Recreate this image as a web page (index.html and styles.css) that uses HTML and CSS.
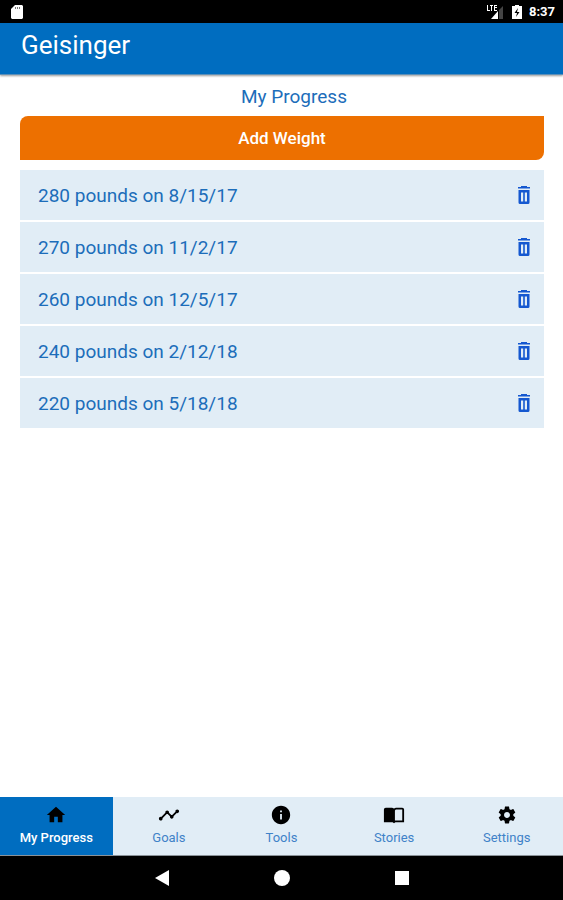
FILE: index.html
```html
<!DOCTYPE html>
<html lang="en">
<head>
  <meta charset="UTF-8">
  <meta name="viewport" content="width=device-width, initial-scale=1.0">
  <title>My Progress</title>
  <link rel="stylesheet" href="styles.css">
</head>
<body>
  <!-- shared icons -->
  <svg class="sprite" aria-hidden="true">
    <symbol id="trash" viewBox="0 0 14 18">
      <path fill-rule="evenodd" d="M4 0h6v1h3v1.500H1V1h3zM1.500 4h11v12.500q0 1.500-1.500 1.500H3q-1.500 0-1.500-1.500zM4 6.500v9h2.200v-9zM7.800 6.500v9H10v-9z"/>
    </symbol>
  </svg>

  <div class="status-bar">
    <svg class="sd-card" viewBox="0 0 12 14" width="12" height="14"><path fill="#fff" d="M4 0h7l1 1v12l-1 1H1l-1-1V4z"/><path fill="#777" d="M4 2h1v2H4zM6 2h1v2H6zM8 2h1v2H8z"/></svg>
    <div class="status-right">
      <svg viewBox="0 0 18 16" width="18" height="16"><path fill="#fff" d="M0 1h1v5h2v1H0zM3 1h3v1H5v5H4V2H3zM7 1h3v1H8v1h2v1H8v2h2v1H7zM11 7v8H4z"/><path fill="#444" d="M12 6l4-4v13h-4z"/></svg>
      <svg viewBox="0 0 10 14" width="10" height="14"><path fill="#fff" d="M3 0h4v1h3v13H0V1h3z"/><path d="M6 3L2.500 8H5l-1 4 3.500-5H5z"/></svg>
      <span>8:37</span>
    </div>
  </div>

  <header class="header">
    <div class="logo">Geisinger</div>
  </header>

  <main class="content">
    <h1>My Progress</h1>
    <button class="add-button" type="button">Add Weight</button>
    <ul class="weights">
      <li>280 pounds on 8/15/17 <button type="button" aria-label="Delete"><svg width="14" height="18"><use href="#trash"/></svg></button></li>
      <li>270 pounds on 11/2/17 <button type="button" aria-label="Delete"><svg width="14" height="18"><use href="#trash"/></svg></button></li>
      <li>260 pounds on 12/5/17 <button type="button" aria-label="Delete"><svg width="14" height="18"><use href="#trash"/></svg></button></li>
      <li>240 pounds on 2/12/18 <button type="button" aria-label="Delete"><svg width="14" height="18"><use href="#trash"/></svg></button></li>
      <li>220 pounds on 5/18/18 <button type="button" aria-label="Delete"><svg width="14" height="18"><use href="#trash"/></svg></button></li>
    </ul>
  </main>

  <nav class="tabs">
    <a href="#progress" class="active">
      <svg viewBox="0 0 24 24"><path d="M10 20v-6h4v6h5v-8h3L12 3 2 12h3v8z"/></svg>
      My Progress
    </a>
    <a href="#goals">
      <svg viewBox="0 0 24 24"><path d="M23 8c0 1.100-.9 2-2 2-.18 0-.35-.02-.51-.07l-3.560 3.550c.05.16.07.34.07.52 0 1.100-.9 2-2 2s-2-.9-2-2c0-.18.02-.36.07-.52l-2.550-2.550c-.16.05-.34.07-.52.07s-.36-.02-.52-.07l-4.550 4.560c.05.16.07.33.07.51 0 1.100-.9 2-2 2s-2-.9-2-2 .9-2 2-2c.18 0 .35.02.51.07l4.560-4.550C8.020 9.360 8 9.180 8 9c0-1.100.9-2 2-2s2 .9 2 2c0 .18-.02.36-.07.52l2.550 2.550c.16-.05.34-.07.52-.07s.36.02.52.07l3.550-3.560C19.020 8.350 19 8.180 19 8c0-1.100.9-2 2-2s2 .9 2 2z"/></svg>
      Goals
    </a>
    <a href="#tools">
      <svg viewBox="0 0 24 24"><path d="M12 2C6.480 2 2 6.480 2 12s4.480 10 10 10 10-4.480 10-10S17.520 2 12 2zm1 15h-2v-6h2v6zm0-8h-2V7h2v2z"/></svg>
      Tools
    </a>
    <a href="#stories">
      <svg viewBox="0 0 24 24"><path fill-rule="evenodd" d="M3 4h7l2 1 2-1h7q2 0 2 2v14h-9.500l-1.500 1-1.500-1H1V6q0-2 2-2zM13 7v11h8V6h-7z"/></svg>
      Stories
    </a>
    <a href="#settings">
      <svg viewBox="-1 -1 26 26"><path d="M19.430 12.980c.04-.32.07-.64.07-.98s-.03-.66-.07-.98l2.110-1.650c.19-.15.24-.42.12-.64l-2-3.460c-.12-.22-.39-.3-.61-.22l-2.490 1c-.52-.4-1.080-.73-1.690-.98l-.38-2.650C14.460 2.180 14.250 2 14 2h-4c-.25 0-.46.18-.49.42l-.38 2.650c-.61.25-1.170.59-1.690.98l-2.490-1c-.23-.09-.49 0-.61.22l-2 3.460c-.13.22-.07.49.12.64l2.110 1.650c-.04.32-.07.65-.07.98s.03.66.07.98l-2.110 1.650c-.19.15-.24.42-.12.64l2 3.460c.12.22.39.3.61.22l2.490-1c.52.4 1.080.73 1.690.98l.38 2.650c.03.24.24.42.49.42h4c.25 0 .46-.18.49-.42l.38-2.650c.61-.25 1.170-.59 1.690-.98l2.490 1c.23.09.49 0 .61-.22l2-3.460c.12-.22.07-.49-.12-.64zM12 15.500c-1.930 0-3.500-1.570-3.500-3.500s1.570-3.500 3.500-3.500 3.500 1.570 3.500 3.500-1.570 3.500-3.500 3.500z"/></svg>
      Settings
    </a>
  </nav>

  <div class="system-bar">
    <button type="button" aria-label="Back"><svg viewBox="0 0 16 16"><path d="M15 0v16L1 8z"/></svg></button>
    <button type="button" aria-label="Home"><svg viewBox="0 0 16 16"><circle cx="8" cy="8" r="8"/></svg></button>
    <button type="button" aria-label="Recent apps"><svg viewBox="0 0 16 16"><path d="M1 1h14v14H1z"/></svg></button>
  </div>
</body>
</html>
```
FILE: styles.css
```css
* {
  box-sizing: border-box;
}

body {
  margin: 0;
  min-height: 100vh;
  display: flex;
  flex-direction: column;
  background: #fff;
  color: #1c6dba;
  font-family: Roboto, sans-serif;
}

button {
  padding: 0;
  border: 0;
  background: none;
  font-family: inherit;
  cursor: pointer;
}

svg {
  display: block;
}

.sprite {
  position: absolute;
  width: 0;
  height: 0;
}

.status-bar {
  display: flex;
  align-items: center;
  justify-content: space-between;
  height: 23px;
  padding: 0 8px 0 11px;
  background: #000;
}

.status-right {
  display: flex;
  align-items: center;
  gap: 7px;
  color: #fff;
  font-size: 13px;
  font-weight: 700;
}

.header {
  height: 52px;
  padding: 6px 21px;
  background: #006dc0;
  border-bottom: 1px solid #5c8fb8;
  box-shadow: 0 1px 2px rgba(0, 0, 0, 0.4);
}

.logo {
  color: #fff;
  font-size: 26px;
  line-height: 32px;
}

.content {
  flex: 1;
  padding: 10px 19px 20px 20px;
}

h1 {
  margin: 0 0 7px;
  padding-left: 24px;
  font-size: 19px;
  font-weight: 400;
  line-height: 24px;
  text-align: center;
}

.add-button {
  display: block;
  width: 100%;
  height: 44px;
  border-radius: 8px 0;
  background: #ed7000;
  color: #fff;
  font-size: 17px;
  font-weight: 500;
}

.weights {
  display: grid;
  gap: 2px;
  margin: 10px 0 0;
  padding: 0;
  list-style: none;
}

.weights li {
  display: flex;
  align-items: center;
  justify-content: space-between;
  height: 50px;
  padding: 0 13px 0 18px;
  background: #e1edf6;
  font-size: 19px;
}

.weights svg {
  fill: #1558d0;
}

.tabs {
  display: grid;
  grid-template-columns: repeat(5, 1fr);
  background: #e1edf6;
  border-bottom: 1px solid #8a9298;
}

.tabs a {
  display: flex;
  flex-direction: column;
  align-items: center;
  gap: 4px;
  height: 58px;
  padding-top: 7px;
  color: #3f82c8;
  font-size: 13px;
  line-height: 16px;
  text-decoration: none;
}

.tabs a.active {
  background: #006dc0;
  color: #fff;
  font-weight: 500;
}

.tabs svg {
  width: 22px;
  height: 22px;
  fill: #000;
}

.system-bar {
  display: flex;
  justify-content: center;
  gap: 104px;
  height: 44px;
  background: #000;
}

.system-bar svg {
  width: 16px;
  height: 16px;
  fill: #fff;
}
```
